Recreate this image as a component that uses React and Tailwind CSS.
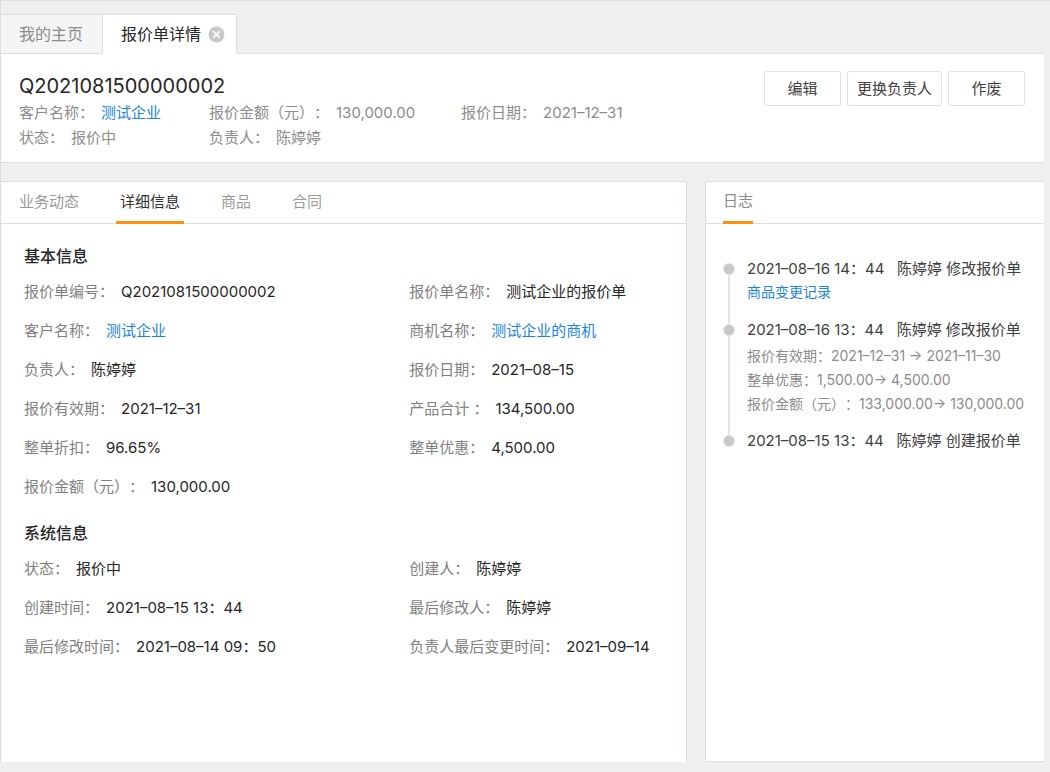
import { useState } from 'react';

const SUMMARY = [
    { label: '客户名称：', value: '测试企业', link: true },
    { label: '报价金额（元）：', value: '130,000.00' },
    { label: '报价日期：', value: '2021–12–31' },
    { label: '状态：', value: '报价中' },
    { label: '负责人：', value: '陈婷婷' },
];

const SECTIONS = [
    {
        title: '基本信息',
        fields: [
            { label: '报价单编号：', value: 'Q2021081500000002' },
            { label: '报价单名称：', value: '测试企业的报价单' },
            { label: '客户名称：', value: '测试企业', link: true },
            { label: '商机名称：', value: '测试企业的商机', link: true },
            { label: '负责人：', value: '陈婷婷' },
            { label: '报价日期：', value: '2021–08–15' },
            { label: '报价有效期：', value: '2021–12–31' },
            { label: '产品合计 ：', value: '134,500.00' },
            { label: '整单折扣：', value: '96.65%' },
            { label: '整单优惠：', value: '4,500.00' },
            { label: '报价金额（元）：', value: '130,000.00' },
        ],
    },
    {
        title: '系统信息',
        fields: [
            { label: '状态：', value: '报价中' },
            { label: '创建人：', value: '陈婷婷' },
            { label: '创建时间：', value: '2021–08–15 13：44' },
            { label: '最后修改人：', value: '陈婷婷' },
            { label: '最后修改时间：', value: '2021–08–14 09：50' },
            { label: '负责人最后变更时间：', value: '2021–09–14' },
        ],
    },
];

const LOGS = [
    { title: '2021–08–16 14：44   陈婷婷 修改报价单', link: '商品变更记录' },
    {
        title: '2021–08–16 13：44   陈婷婷 修改报价单',
        changes: [
            '报价有效期：2021–12–31 → 2021–11–30',
            '整单优惠：1,500.00→ 4,500.00',
            '报价金额（元）：133,000.00→ 130,000.00',
        ],
    },
    { title: '2021–08–15 13：44   陈婷婷 创建报价单' },
];

const Field = ({ field, className, valueClass }) => (
    <div className={`flex items-center gap-[7px] whitespace-nowrap ${className}`}>
        <dt>{field.label}</dt>
        <dd className={valueClass}>
            {field.link ? <a href="#" className="text-[#1c84e0]">{field.value}</a> : field.value}
        </dd>
    </div>
);

const PageTabs = () => (
    <nav className="flex pt-[13px] text-base">
        <a href="#" className="flex h-10 items-center border-y border-[#dcdee2] bg-[#f4f5f7] pr-[19px] pl-[18px] text-[#8c8c8c]">我的主页</a>
        <div className="flex h-10 items-center gap-[7px] border border-[#dcdee2] border-b-white bg-white pr-[11px] pl-[18px] text-[#262626]">
            <a href="#">报价单详情</a>
            <button type="button" aria-label="关闭" className="flex">
                <svg width="17" height="17" viewBox="0 0 17 17">
                    <circle cx="8.5" cy="8.5" r="8" fill="#c8c8c8" />
                    <path d="M5.6 5.6l5.8 5.8M11.4 5.6l-5.8 5.8" stroke="#fff" strokeWidth="1.6" strokeLinecap="round" />
                </svg>
            </button>
        </div>
        <div className="flex-1 border-b border-[#dcdee2]" />
    </nav>
);

const QuoteHeader = () => (
    <header className="flex justify-between border-b border-[#dcdee2] bg-white pt-[17px] pr-[19px] pb-[11px] pl-[18px]">
        <div>
            <h1 className="text-xl leading-[30px] text-[#262626]">Q2021081500000002</h1>
            <dl className="grid grid-cols-[190px_252px_auto] text-[#8c8c8c]">
                {SUMMARY.map(field => (
                    <Field key={field.label} field={field} className="h-[25px]" />
                ))}
            </dl>
        </div>
        <div className="flex items-start gap-1.5 text-[#404040]">
            <button type="button" className="h-[35px] w-[77px] rounded-xs border border-[#e0e0e4] bg-white pt-0.5">编辑</button>
            <button type="button" className="h-[35px] rounded-xs border border-[#e0e0e4] bg-white px-[9px] pt-0.5">更换负责人</button>
            <button type="button" className="h-[35px] w-[77px] rounded-xs border border-[#e0e0e4] bg-white pt-0.5">作废</button>
        </div>
    </header>
);

const DetailPanel = () => {
    const [activeTab, setActiveTab] = useState('详细信息');

    return (
        <main className="min-w-0 flex-1 border-t border-r border-[#dcdee2] bg-white">
            <div className="flex h-[42px] gap-[33px] border-b border-[#dcdee2] pl-[14px]">
                {['业务动态', '详细信息', '商品', '合同'].map(tab => (
                    <button
                        key={tab}
                        type="button"
                        onClick={() => setActiveTab(tab)}
                        className={`-mb-px border-b-3 px-1 pt-0.5 ${activeTab === tab ? 'border-[#ff8f0f] text-[#333333]' : 'border-transparent text-[#999999]'}`}
                    >
                        {tab}
                    </button>
                ))}
            </div>

            <div className="flex flex-col gap-3.5 pt-5 pr-5 pb-5 pl-[23px]">
                {SECTIONS.map(section => (
                    <section key={section.title}>
                        <h2 className="mb-[5px] text-base leading-6 font-medium text-[#262626]">{section.title}</h2>
                        <dl className="grid grid-cols-[3fr_2fr] text-[#808080]">
                            {section.fields.map(field => (
                                <Field key={field.label} field={field} className="h-[39px]" valueClass="text-[#262626]" />
                            ))}
                        </dl>
                    </section>
                ))}
            </div>
        </main>
    );
};

const LogItem = ({ log, first, last }) => (
    <li className="flex gap-3">
        {/* Timeline rail */}
        <div className="flex w-3 flex-col items-center">
            <span className={`h-1.5 w-0.5 ${first ? '' : 'bg-[#e4e4e4]'}`} />
            <span className="size-3 rounded-full border border-[#e4e4e4] bg-[#c8c8c8]" />
            {!last && <span className="w-0.5 flex-1 bg-[#e4e4e4]" />}
        </div>
        <div className="pb-[13px] text-sm leading-6 whitespace-pre">
            <p className="text-[15px] leading-6 text-[#404040]">{log.title}</p>
            {log.link && <a href="#" className="mb-0.5 block leading-[22px] text-[#1c84e0]">{log.link}</a>}
            {log.changes && (
                <div className="mt-0.5 text-[#8c8c8c]">
                    {log.changes.map(change => <p key={change}>{change}</p>)}
                </div>
            )}
        </div>
    </li>
);

const LogPanel = () => (
    <aside className="w-[339px] border-t border-b border-l border-[#dcdee2] bg-white">
        <div className="flex h-[42px] border-b border-[#dcdee2] pl-[17px]">
            <h2 className="-mb-px flex items-center border-b-3 border-[#ff8f0f] text-[#8c8c8c]">日志</h2>
        </div>
        <ol className="pt-[33px] pl-[17px]">
            {LOGS.map((log, i) => (
                <LogItem key={log.title} log={log} first={i === 0} last={i === LOGS.length - 1} />
            ))}
        </ol>
    </aside>
);

export default function App() {
    return (
        <div className="flex min-h-screen flex-col border-t border-[#dcdee2] bg-[#edeff1] pr-1.5 pb-2.5 font-['Inter','Noto_Sans_CJK_SC',sans-serif] text-[15px] [text-spacing-trim:space-all]" lang="zh-CN">
            <div className="flex flex-1 flex-col border-l border-[#dcdee2]">
                <PageTabs />
                <QuoteHeader />
                <div className="flex flex-1 gap-[18px] pt-[18px]">
                    <DetailPanel />
                    <LogPanel />
                </div>
            </div>
        </div>
    );
}
